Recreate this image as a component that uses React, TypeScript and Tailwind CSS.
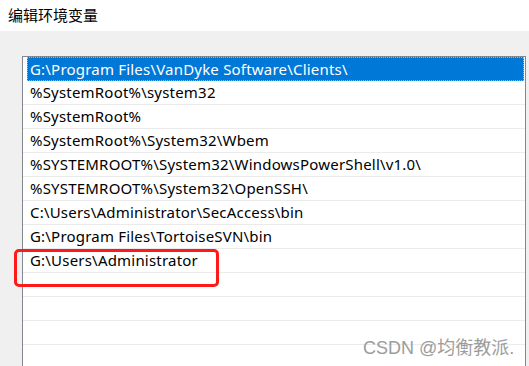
import React from 'react';

// entries of the PATH variable, first one is selected
const paths: string[] = [
  'G:\\Program Files\\VanDyke Software\\Clients\\',
  '%SystemRoot%\\system32',
  '%SystemRoot%',
  '%SystemRoot%\\System32\\Wbem',
  '%SYSTEMROOT%\\System32\\WindowsPowerShell\\v1.0\\',
  '%SYSTEMROOT%\\System32\\OpenSSH\\',
  'C:\\Users\\Administrator\\SecAccess\\bin',
  'G:\\Program Files\\TortoiseSVN\\bin',
  'G:\\Users\\Administrator',
  '',
  '',
  '',
  '',
];

export default function App() {
  return (
    <div className="relative w-[529px] h-[366px] overflow-hidden flex flex-col bg-white">
      {/* window title */}
      <header
        className="h-[31px] shrink-0 flex items-center pl-[8px] text-[15px] text-black bg-white"
        style={{ fontFamily: '"Noto Sans CJK SC", sans-serif' }}
      >
        编辑环境变量
      </header>

      {/* dialog body */}
      <div className="flex-1 bg-[#f0f0f0] pt-[25px] pl-[22px]">
        <div
          className="w-[504px] h-[400px] bg-white border border-[#828790] text-[15px] tracking-[0.2px]"
          style={{ fontFamily: '"Noto Sans", sans-serif' }}
        >
          {paths.map((p, i) =>
            i === 0 ? (
              <div key={i} className="h-[24px] pl-[4px] pr-[1px]">
                <div className="h-full bg-[#0078d7] border border-dotted border-[#f7a35a] flex items-center pl-[2px] text-white whitespace-nowrap">
                  {p}
                </div>
              </div>
            ) : (
              <div
                key={i}
                className="h-[24px] border-b border-[#ebebeb] flex items-center pl-[7px] text-black whitespace-nowrap"
              >
                {p}
              </div>
            )
          )}
        </div>
      </div>

      {/* red highlight box */}
      <div className="absolute left-[14px] top-[249px] w-[205px] h-[38px] border-[3px] border-[#ff1a1a] rounded-[5px]" />

      {/* watermark */}
      <div
        className="absolute left-[363px] top-[335px] text-[18px] text-[#9c9c9c] whitespace-nowrap"
        style={{ fontFamily: '"Liberation Sans", "Noto Sans CJK SC", sans-serif' }}
      >
        CSDN @均衡教派.
      </div>
    </div>
  );
}
